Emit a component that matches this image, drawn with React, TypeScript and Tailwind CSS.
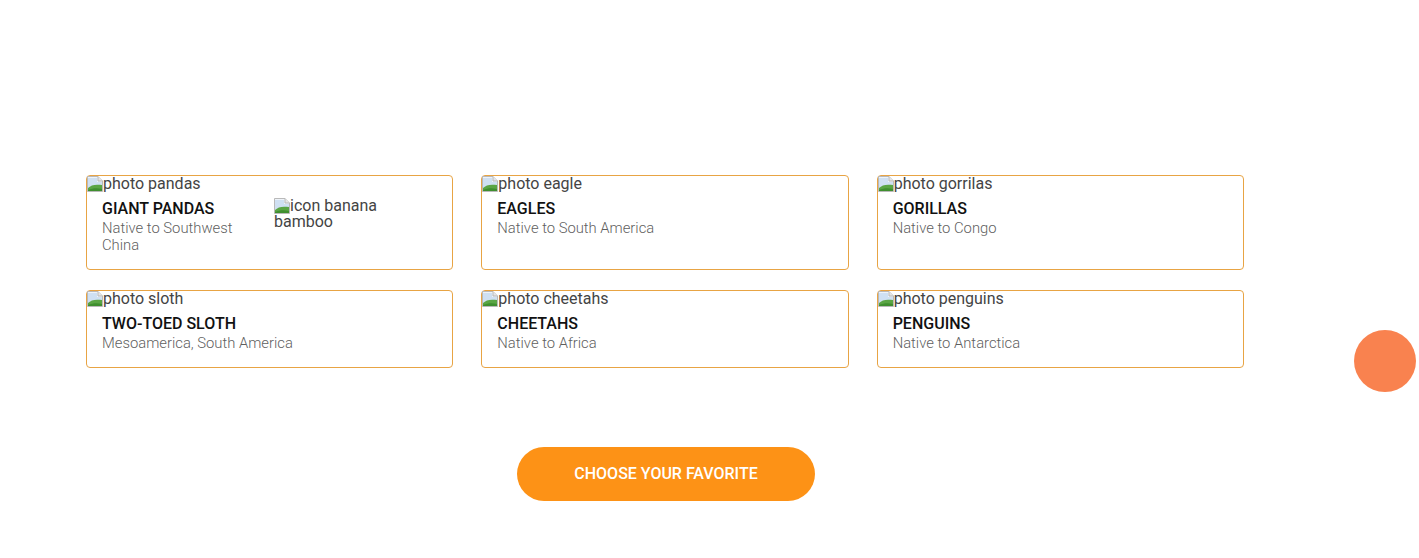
import React from 'react';

type Animal = {
  photo: string;
  name: string;
  native: string;
  icon?: string;
};

const animals: Animal[] = [
  { photo: 'photo pandas', name: 'GIANT PANDAS', native: 'Native to Southwest China', icon: 'icon banana bamboo' },
  { photo: 'photo eagle', name: 'EAGLES', native: 'Native to South America' },
  { photo: 'photo gorrilas', name: 'GORILLAS', native: 'Native to Congo' },
  { photo: 'photo sloth', name: 'TWO-TOED SLOTH', native: 'Mesoamerica, South America' },
  { photo: 'photo cheetahs', name: 'CHEETAHS', native: 'Native to Africa' },
  { photo: 'photo penguins', name: 'PENGUINS', native: 'Native to Antarctica' },
];

// stand-in for the browser's broken image glyph
function BrokenImage() {
  return (
    <svg viewBox="0 0 16 16" className="w-4 h-4 shrink-0 inline-block align-top">
      <path d="M0.5 0.5 H11 L15.5 5 V15.5 H0.5 Z" fill="#eef3f9" stroke="#b9b9b9" />
      <path d="M11 0.5 V5 H15.5" fill="#e6e6e6" stroke="#b9b9b9" />
      <path d="M1 2 H10 V6 H15 V9 L1 12 Z" fill="#cfe0f2" />
      <path d="M1 15 V12 C4 9 8 8 15 9 V15 Z" fill="#5aa544" />
      <path d="M1 15 V14 C6 12 10 12 15 13 V15 Z" fill="#3f8f2f" />
    </svg>
  );
}

function AltText({ text }: { text: string }) {
  return (
    <div className="flex items-start h-[16px] text-[16px] leading-[15px] text-[#444]">
      <BrokenImage />
      <span>{text}</span>
    </div>
  );
}

function AnimalCard({ animal }: { animal: Animal }) {
  return (
    <div className="border border-[#e8a444] rounded-[4px] bg-white">
      <AltText text={animal.photo} />
      <div className="flex items-start px-[15px] pt-[7px] pb-[15px]">
        <div className={animal.icon ? 'w-[160px]' : ''}>
          <h3 className="text-[16px] leading-[20px] font-medium text-[#111]">{animal.name}</h3>
          <p className="mt-[1px] text-[14.8px] leading-[17px] font-light text-[#5f5f5f]">{animal.native}</p>
        </div>
        {animal.icon && (
          <div className="ml-[12px] -mt-[1px] w-[120px] flex items-start text-[16px] leading-[15.5px] text-[#444]">
            <span>
              <BrokenImage />
              {animal.icon}
            </span>
          </div>
        )}
      </div>
    </div>
  );
}

export default function App() {
  return (
    <div className="relative w-[1419px] h-[558px] bg-white font-['Roboto',sans-serif] overflow-hidden">
      <div className="pl-[86px] pt-[175px]">
        <div className="w-[1158px]">
          <div className="grid grid-cols-3 gap-x-[28px] gap-y-[20px]">
            {animals.map((a) => (
              <AnimalCard key={a.name} animal={a} />
            ))}
          </div>
          <div className="flex justify-center mt-[79px] pl-[2px]">
            <button className="w-[298px] h-[54px] rounded-full bg-[#fd9216] text-white text-[16px] font-medium">
              CHOOSE YOUR FAVORITE
            </button>
          </div>
        </div>
      </div>

      {/* floating round button */}
      <div className="absolute left-[1354px] top-[330px] w-[62px] h-[62px] rounded-full bg-[#f9824f]" />
    </div>
  );
}
